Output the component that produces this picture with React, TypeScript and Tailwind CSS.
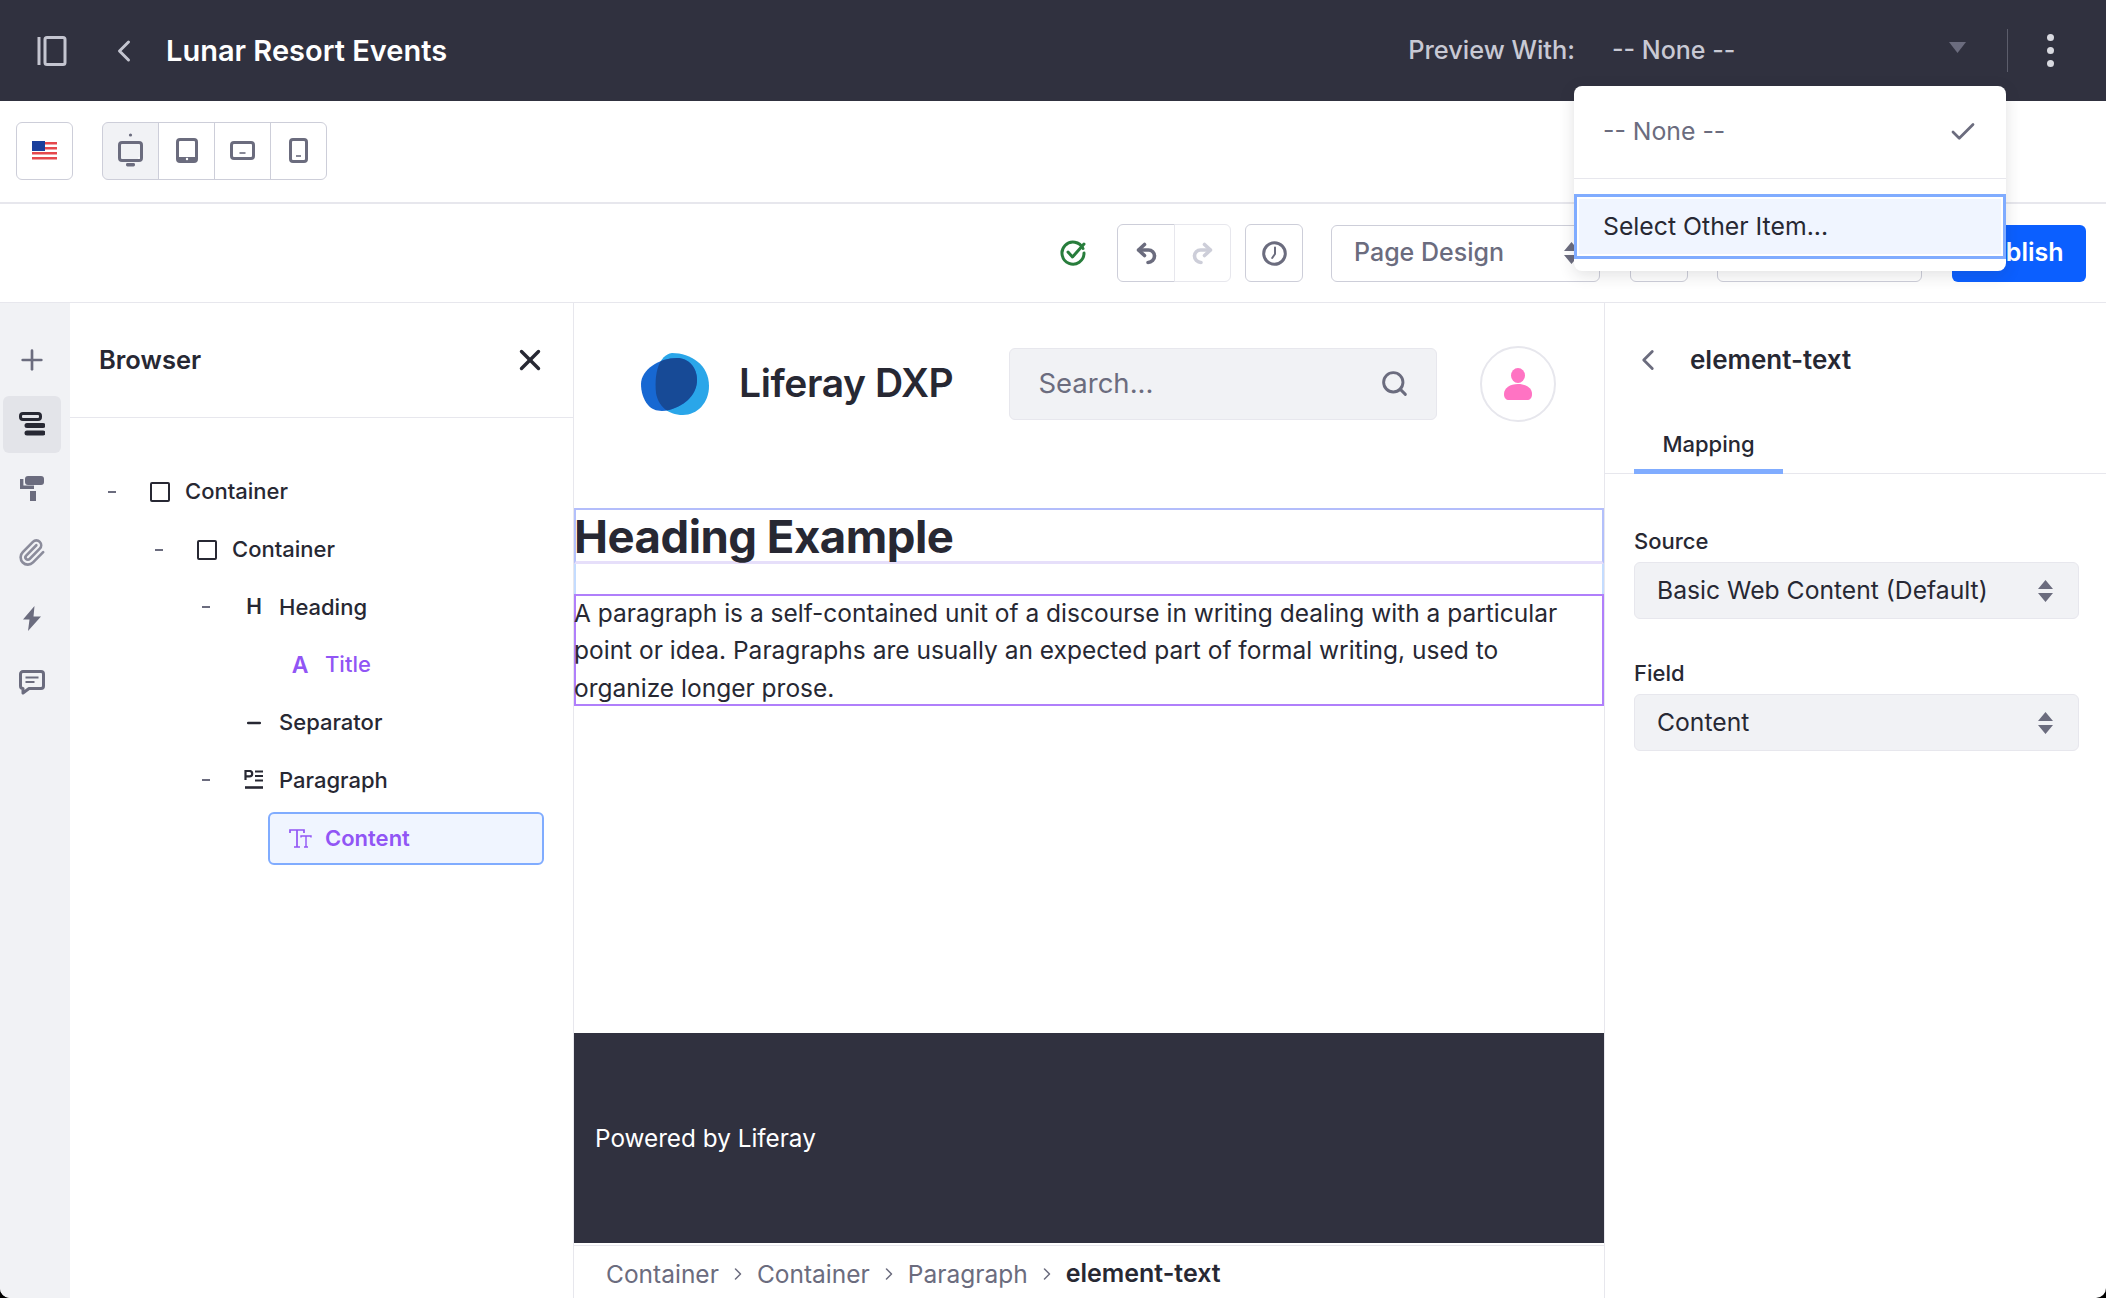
import { ChevronLeft, ChevronRight, Plus, X, Check, Search, Paperclip, Minus } from 'lucide-react'
import type { ReactNode } from 'react'

const outlineBtn = 'flex h-[58px] items-center justify-center border border-[#cdced9]'

function SidebarToggle() {
  return (
    <svg width="30" height="30" viewBox="0 0 30 30" fill="none" stroke="#c4c5d0" strokeWidth="3">
      <path d="M2 1v28" />
      <rect x="8" y="1.5" width="20" height="27" rx="2" />
    </svg>
  )
}

function Flag() {
  return (
    <svg width="25" height="19" viewBox="0 0 25 19">
      <rect width="25" height="19" fill="#fff" />
      <path d="M0 1h25v2.4H0zM0 6h25v2.4H0zM0 11h25v2.4H0zM0 16h25v2.6H0z" fill="#e5484d" />
      <rect width="13" height="10" fill="#1a3f9c" />
    </svg>
  )
}

function DeviceIcon({ kind }: { kind: 'desktop' | 'tablet' | 'landscape' | 'phone' }) {
  const c = '#6b6c7e'
  if (kind === 'desktop') {
    return (
      <svg width="25" height="35" viewBox="0 0 25 35" fill="none">
        <circle cx="12.5" cy="2" r="1.6" fill={c} />
        <rect x="1.5" y="9.5" width="22" height="18" rx="2.5" stroke={c} strokeWidth="3" />
        <rect x="8" y="30" width="9" height="3.4" rx="1.4" fill={c} />
        <circle cx="21" cy="25" r="1" fill="#fff" />
      </svg>
    )
  }
  if (kind === 'tablet') {
    return (
      <svg width="22" height="25" viewBox="0 0 22 25" fill="none">
        <rect x="1.5" y="1.5" width="19" height="22" rx="2.5" stroke={c} strokeWidth="3" />
        <path d="M2 19h18v4H2z" fill={c} />
        <circle cx="11" cy="21" r="1.2" fill="#fff" />
      </svg>
    )
  }
  if (kind === 'landscape') {
    return (
      <svg width="25" height="19" viewBox="0 0 25 19" fill="none">
        <rect x="1.5" y="1.5" width="22" height="16" rx="2.5" stroke={c} strokeWidth="3" />
        <path d="M9.5 12h6" stroke={c} strokeWidth="1.6" />
      </svg>
    )
  }
  return (
    <svg width="19" height="25" viewBox="0 0 19 25" fill="none">
      <rect x="1.5" y="1.5" width="16" height="22" rx="2.5" stroke={c} strokeWidth="3" />
      <path d="M7 18h5" stroke={c} strokeWidth="1.6" />
    </svg>
  )
}

function UpdownCaret({ color = '#6b6c7e' }: { color?: string }) {
  return (
    <svg width="15" height="22" viewBox="0 0 15 22" fill={color}>
      <path d="M7.5 0 15 9H0zM0 13h15l-7.5 9z" />
    </svg>
  )
}

function StatusCheck() {
  return (
    <svg width="26" height="26" viewBox="0 0 26 26" fill="none" stroke="#287d3c" strokeWidth="3">
      <path d="M23 8.5A11 11 0 1 0 24 13" strokeLinecap="round" />
      <path d="m8 12 4.5 5L24 4" strokeLinecap="round" strokeLinejoin="round" />
    </svg>
  )
}

function UndoIcon({ flip, color }: { flip?: boolean; color: string }) {
  return (
    <svg width="21" height="23" viewBox="0 0 21 23" fill="none" stroke={color} strokeWidth="3.6" strokeLinecap="round" strokeLinejoin="round" className={flip ? '-scale-x-100' : ''}>
      <path d="M8.5 2.5 2.5 8l6 5.5" />
      <path d="M3 8h9.5a6 6 0 0 1 6 6v0a6.5 6.5 0 0 1-6.5 6.5" />
    </svg>
  )
}

function HistoryIcon() {
  return (
    <svg width="25" height="25" viewBox="0 0 25 25" fill="none" stroke="#6b6c7e">
      <circle cx="12.5" cy="12.5" r="10.8" strokeWidth="3" />
      <path d="M13 6.5V13l-2.8 4" strokeWidth="2" strokeLinecap="round" strokeLinejoin="round" />
    </svg>
  )
}

function BrowserIcon() {
  return (
    <svg width="26" height="25" viewBox="0 0 26 25" fill="none" stroke="#272833">
      <rect x="1.5" y="1.5" width="20" height="6" rx="2.5" strokeWidth="3" />
      <path d="M8 13.5h16M8 21h16" strokeWidth="5" strokeLinecap="round" />
    </svg>
  )
}

function RollerIcon() {
  return (
    <svg width="24" height="25" viewBox="0 0 24 25" fill="#6b6c7e">
      <rect x="5" y="0" width="19" height="9" rx="3" />
      <path d="M0 3h3.4v6.5H14V13H0zM10 15h6v10h-6z" />
    </svg>
  )
}

function BoltIcon() {
  return (
    <svg width="18" height="25" viewBox="0 0 18 25" fill="#6b6c7e">
      <path d="M11.5 0 0 13.5h6.5L5 25l13-14.5h-7.5z" />
    </svg>
  )
}

function CommentIcon() {
  return (
    <svg width="26" height="25" viewBox="0 0 26 25" fill="none" stroke="#6b6c7e">
      <path d="M4 1.5h18A2.5 2.5 0 0 1 24.5 4v12a2.5 2.5 0 0 1-2.5 2.5H10L4 23v-4.5A2.5 2.5 0 0 1 1.5 16V4A2.5 2.5 0 0 1 4 1.5Z" strokeWidth="3" strokeLinejoin="round" />
      <path d="M6.5 7.5h13M6.5 12h9" strokeWidth="2.2" />
    </svg>
  )
}

function ParagraphIcon() {
  return (
    <svg width="20" height="20" viewBox="0 0 20 20" fill="none" stroke="#272833" strokeWidth="2">
      <path d="M1.5 10V1h4a2.6 2.6 0 0 1 0 5.4h-4" strokeWidth="2.2" />
      <path d="M11 1.5h8M11 6h8M11 10.5h8" />
      <path d="M1 17.5h18" strokeWidth="2.6" />
    </svg>
  )
}

function TextSizeIcon() {
  return (
    <svg width="23" height="19" viewBox="0 0 23 19" fill="none" stroke="#9155f5" strokeWidth="1.7">
      <path d="M1 4V1h14v3M8 1v17M5 18h6" />
      <path d="M12 8.5V7h10v1.5M17 7v11M15 18h4" strokeWidth="1.4" />
    </svg>
  )
}

function TreeRow({ indent, dash, icon, label, accent }: { indent: number; dash?: boolean; icon: ReactNode; label: string; accent?: boolean }) {
  return (
    <div className="flex h-[57.7px] items-center" style={{ paddingLeft: indent }}>
      <span className="flex w-[40px] items-center">
        {dash ? <span className="ml-[1px] h-[2px] w-[8px] bg-[#6b6c7e]" /> : null}
      </span>
      <span className="flex w-[26px] shrink-0 items-center justify-center">{icon}</span>
      <span className={`ml-[12px] text-[22px] font-medium ${accent ? 'text-[#9155f5]' : 'text-[#272833]'}`}>{label}</span>
    </div>
  )
}

const squareIcon = <span className="h-[20px] w-[20px] rounded-[2px] border-[2.5px] border-[#272833]" />

const logoLight = 'M31 0C50 0 68 12 68 33 68 50 56 62 42 62 26 62 17 52 15 40 13 20 18 2 31 0Z'
const logoBlue = 'M36 5C48 5 56 15 56 27 56 40 46 52 28 57 20 59 12 58 7 52 2 46 0 38 0 31 0 17 18 5 36 5Z'

function Logo() {
  return (
    <svg width="68" height="62" viewBox="0 0 68 62">
      <clipPath id="logo-overlap"><path d={logoBlue} /></clipPath>
      <path d={logoLight} fill="#2aa6e9" />
      <path d={logoBlue} fill="#1768d2" />
      <path d={logoLight} fill="#174a96" clipPath="url(#logo-overlap)" />
    </svg>
  )
}

function Avatar() {
  return (
    <svg width="28" height="32" viewBox="0 0 28 32" fill="#ff73c3">
      <ellipse cx="14" cy="7.5" rx="7" ry="7.5" />
      <path d="M14 16c8 0 14 4 14 10 0 4-2 6-5 6H5c-3 0-5-2-5-6 0-6 6-10 14-10Z" />
    </svg>
  )
}

function Field({ label, value, className }: { label: string; value: string; className?: string }) {
  return (
    <div className={className}>
      <div className="text-[22px] font-medium leading-[24px] text-[#272833]">{label}</div>
      <div className="mt-[9px] flex h-[57px] items-center justify-between rounded-[6px] border border-[#e7e7ed] bg-[#f1f2f5] pl-[22px] pr-[25px] text-[24.7px] text-[#272833]">
        <span>{value}</span>
        <UpdownCaret />
      </div>
    </div>
  )
}

export default function App() {
  return (
    <div className="h-[1298px] w-[2106px] bg-black">
      <div className="relative flex h-[1298px] w-[2106px] flex-col overflow-hidden rounded-b-[10px] bg-white [font-family:Inter,sans-serif]">
        <header className="flex h-[101px] shrink-0 items-center bg-[#30313f] pl-[37px] pr-[52px]">
          <SidebarToggle />
          <ChevronLeft className="ml-[39px] h-[36px] w-[36px] text-[#c4c5d0]" strokeWidth={2} />
          <h1 className="ml-[24px] text-[29px] font-semibold text-white">Lunar Resort Events</h1>
          <span className="ml-auto text-[25.4px] font-medium text-[#c8c9d4]">Preview With:</span>
          <span className="ml-[37px] w-[337px] text-[25px] font-medium text-[#c8c9d4]">-- None --</span>
          <svg width="17" height="12" viewBox="0 0 17 12" className="mb-[6px]"><path d="M0 0h17l-8.5 11z" fill="#6b6c7e" /></svg>
          <span className="ml-[41px] h-[43px] w-px bg-[#5c5d6b]" />
          <span className="ml-[39px] flex flex-col gap-[6px]">
            <i className="h-[7px] w-[7px] rounded-full bg-[#d8d9e0]" />
            <i className="h-[7px] w-[7px] rounded-full bg-[#d8d9e0]" />
            <i className="h-[7px] w-[7px] rounded-full bg-[#d8d9e0]" />
          </span>
        </header>

        <div className="flex h-[103px] shrink-0 items-center gap-[29px] border-b-2 border-[#e7e7ed] pb-[2px] pl-[16px]">
          <button className={`${outlineBtn} w-[57px] rounded-[6px]`}><Flag /></button>
          <div className="flex">
            <button className={`${outlineBtn} w-[57px] rounded-l-[6px] bg-[#f1f2f5]`}><DeviceIcon kind="desktop" /></button>
            <button className={`${outlineBtn} -ml-px w-[57px]`}><DeviceIcon kind="tablet" /></button>
            <button className={`${outlineBtn} -ml-px w-[57px]`}><DeviceIcon kind="landscape" /></button>
            <button className={`${outlineBtn} -ml-px w-[57px] rounded-r-[6px]`}><DeviceIcon kind="phone" /></button>
          </div>
        </div>

        <div className="flex h-[99px] shrink-0 items-center justify-end border-b border-[#e7e7ed] pr-[20px]">
          <StatusCheck />
          <div className="ml-[31px] flex">
            <button className={`${outlineBtn} w-[58px] rounded-l-[6px]`}><UndoIcon color="#6b6c7e" /></button>
            <button className="-ml-px flex h-[58px] w-[57px] items-center justify-center rounded-r-[6px] border border-[#e7e7ed]"><UndoIcon flip color="#cdced9" /></button>
          </div>
          <button className={`${outlineBtn} ml-[14px] w-[58px] rounded-[6px]`}><HistoryIcon /></button>
          <div className="ml-[28px] flex h-[57px] w-[269px] items-center justify-between rounded-[6px] border border-[#cdced9] pl-[22px] pr-[20px] text-[25px] font-medium text-[#6b6c7e]">
            <span>Page Design</span>
            <UpdownCaret />
          </div>
          <button className={`${outlineBtn} ml-[30px] w-[58px] rounded-[6px]`} />
          <button className={`${outlineBtn} ml-[29px] h-[57px] w-[205px] rounded-[6px]`} />
          <button className="ml-[30px] h-[57px] w-[134px] rounded-[6px] bg-[#0b5fff] text-[25px] font-semibold text-white">Publish</button>
        </div>

        <div className="flex min-h-0 flex-1">
          <nav className="flex w-[70px] shrink-0 flex-col items-center bg-[#f1f2f5] pr-[7px]">
            <Plus className="mt-[41px] h-[32px] w-[32px] text-[#6b6c7e]" strokeWidth={2} />
            <span className="mt-[20px] flex h-[57px] w-[58px] shrink-0 items-center justify-center rounded-[6px] bg-[#e3e4e9]"><BrowserIcon /></span>
            <span className="mt-[23px]"><RollerIcon /></span>
            <Paperclip className="mt-[37px] h-[29px] w-[29px] text-[#8b8c9b]" strokeWidth={2.2} />
            <span className="mt-[39px]"><BoltIcon /></span>
            <span className="mt-[39px]"><CommentIcon /></span>
          </nav>

          <aside className="w-[504px] shrink-0 border-r border-[#e7e7ed]">
            <div className="flex h-[115px] items-center justify-between border-b border-[#e7e7ed] pl-[29px] pr-[26px]">
              <span className="text-[25.5px] font-semibold text-[#272833]">Browser</span>
              <X className="h-[34px] w-[34px] text-[#272833]" strokeWidth={2.4} />
            </div>
            <div className="pt-[45px]">
              <TreeRow indent={37} dash icon={squareIcon} label="Container" />
              <TreeRow indent={84} dash icon={squareIcon} label="Container" />
              <TreeRow indent={131} dash icon={<span className="text-[21px] font-semibold text-[#272833]">H</span>} label="Heading" />
              <TreeRow indent={177} icon={<span className="text-[23px] font-semibold text-[#9155f5]">A</span>} label="Title" accent />
              <TreeRow indent={131} icon={<Minus className="h-[20px] w-[20px] text-[#272833]" strokeWidth={3} />} label="Separator" />
              <TreeRow indent={131} dash icon={<ParagraphIcon />} label="Paragraph" />
              <div className="ml-[198px] mr-[29px] mt-[3px] flex h-[53px] items-center rounded-[6px] border-2 border-[#80acff] bg-[#f0f5ff] pl-[17px]">
                <span className="flex w-[26px] justify-center"><TextSizeIcon /></span>
                <span className="ml-[12px] text-[22px] font-semibold text-[#9155f5]">Content</span>
              </div>
            </div>
          </aside>

          <main className="flex w-[1031px] shrink-0 flex-col border-r border-[#e7e7ed]">
            <div className="flex h-[205px] shrink-0 items-center pb-[44px] pl-[67px]">
              <Logo />
              <span className="ml-[30px] text-[39px] font-semibold tracking-[-0.4px] text-[#272833]">Liferay DXP</span>
              <div className="ml-[56px] flex h-[72px] w-[428px] items-center justify-between rounded-[6px] border border-[#e7e7ed] bg-[#f1f2f5] pl-[28px] pr-[27px] text-[27.5px] text-[#6b6c7e]">
                <span>Search...</span>
                <Search className="h-[29px] w-[29px]" strokeWidth={2.4} />
              </div>
              <div className="ml-[43px] flex h-[76px] w-[76px] items-center justify-center rounded-full border-2 border-[#e7e7ed]"><Avatar /></div>
            </div>
            <div className="h-[56px] border-x-2 border-t-2 border-b-[3px] border-x-[#b3c0fb] border-t-[#b3bdfb] border-b-[#e6dffa] text-[45.5px] font-bold leading-[54px] tracking-[-0.5px] text-[#272833]">
              <span className="-ml-[2px] block">Heading Example</span>
            </div>
            <div className="h-[30px] border-x-2 border-[#c4dcff]" />
            <p className="h-[112px] border-2 border-[#b07ffb] text-[24.5px] leading-[37.4px] text-[#272833]">
              <span className="-ml-[2px] -mt-px block">
                A paragraph is a self-contained unit of a discourse in writing dealing with a particular point or idea. Paragraphs are usually an expected part of formal writing, used to organize longer prose.
              </span>
            </p>
            <div className="flex-1" />
            <footer className="flex h-[210px] shrink-0 items-center bg-[#30313f] pl-[21px] text-[24.3px] text-white">Powered by Liferay</footer>
            <div className="h-[3px] shrink-0 border-b border-[#e7e7ed]" />
            <div className="flex h-[52px] shrink-0 items-center pl-[32px] pt-[4px] text-[24.5px] text-[#6b6c7e]">
              <span>Container</span>
              <ChevronRight className="mx-[9px] h-[20px] w-[20px]" strokeWidth={1.8} />
              <span>Container</span>
              <ChevronRight className="mx-[9px] h-[20px] w-[20px]" strokeWidth={1.8} />
              <span>Paragraph</span>
              <ChevronRight className="mx-[9px] h-[20px] w-[20px]" strokeWidth={1.8} />
              <span className="text-[25px] font-semibold text-[#272833]">element-text</span>
            </div>
          </main>

          <aside className="min-w-0 flex-1">
            <div className="flex h-[113px] items-center pl-[26px]">
              <ChevronLeft className="h-[34px] w-[34px] text-[#6b6c7e]" strokeWidth={2} />
              <span className="ml-[25px] text-[26px] font-semibold text-[#272833]">element-text</span>
            </div>
            <div className="h-[58px] border-b border-[#e7e7ed] pl-[29px]">
              <div className="flex h-[58px] w-[149px] items-center justify-center border-b-[5px] border-[#80acff] pt-[3px] text-[22px] font-medium text-[#272833]">Mapping</div>
            </div>
            <div className="pl-[29px] pr-[27px] pt-[55px]">
              <Field label="Source" value="Basic Web Content (Default)" />
              <Field label="Field" value="Content" className="mt-[42px]" />
            </div>
          </aside>
        </div>

        <div className="absolute left-[1574px] top-[86px] h-[185px] w-[432px] rounded-[8px] bg-white shadow-[0_4px_16px_rgba(39,40,51,0.14)]">
          <div className="flex h-[93px] items-center justify-between border-b border-[#e7e7ed] pl-[29px] pr-[28px] text-[24.8px] text-[#6b6c7e]">
            <span>-- None --</span>
            <Check className="h-[30px] w-[30px]" strokeWidth={2.2} />
          </div>
          <div className="mt-[15px] flex h-[65px] items-center border-[3px] border-[#80acff] bg-[#f0f5ff] pl-[26px] text-[24.8px] text-[#272833] shadow-[inset_0_0_0_2px_white]">Select Other Item...</div>
        </div>
      </div>
    </div>
  )
}
